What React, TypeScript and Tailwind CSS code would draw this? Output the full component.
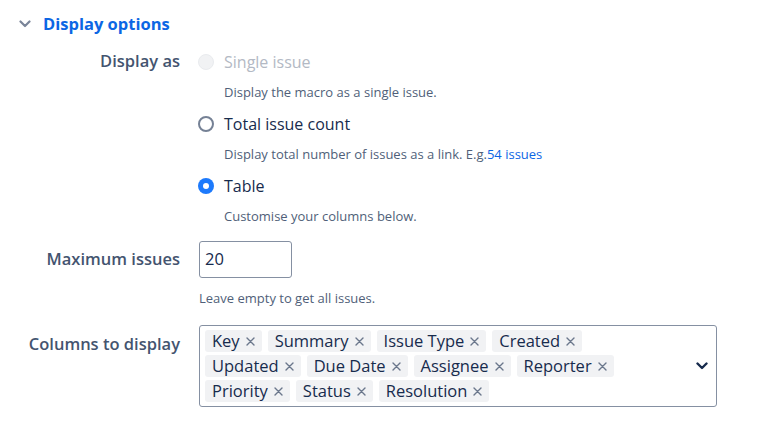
import React from "react";

const tags = [
  "Key",
  "Summary",
  "Issue Type",
  "Created",
  "Updated",
  "Due Date",
  "Assignee",
  "Reporter",
  "Priority",
  "Status",
  "Resolution",
];

function Radio({ state }: { state: "off" | "on" | "disabled" }) {
  if (state === "on") {
    return (
      <span className="flex h-[16px] w-[16px] items-center justify-center rounded-full bg-[#1d7afc]">
        <span className="h-[6px] w-[6px] rounded-full bg-white" />
      </span>
    );
  }
  if (state === "disabled") {
    return <span className="h-[16px] w-[16px] rounded-full border border-[#e9ebee] bg-[#f1f2f4]" />;
  }
  return <span className="h-[16px] w-[16px] rounded-full border-2 border-[#758195] bg-white" />;
}

function Option({
  state,
  label,
  children,
}: {
  state: "off" | "on" | "disabled";
  label: string;
  children: React.ReactNode;
}) {
  return (
    <div>
      <div className="flex h-[31px] items-center gap-[10px]">
        <Radio state={state} />
        <span
          className={
            "text-[16px] " + (state === "disabled" ? "text-[#b3b9c4]" : "text-[#172b4d]")
          }
        >
          {label}
        </span>
      </div>
      <div className="flex h-[31px] items-center pl-[26px] text-[13px] text-[#505f79]">
        {children}
      </div>
    </div>
  );
}

function Cross() {
  return (
    <svg width="9" height="9" viewBox="0 0 9 9" className="text-[#6b778c]">
      <path d="M1 1l7 7M8 1l-7 7" stroke="currentColor" strokeWidth="1.4" strokeLinecap="round" />
    </svg>
  );
}

export default function App() {
  return (
    <div
      className="h-[427px] w-[760px] bg-white"
      style={{ fontFamily: '"Open Sans", "Noto Sans", sans-serif' }}
    >
      <div className="flex h-[46px] items-center gap-[12px] pl-[19px] pt-[2px]">
        <svg width="12" height="8" viewBox="0 0 12 8" className="text-[#7a8599]">
          <path d="M1.5 1.5 6 6l4.5-4.5" fill="none" stroke="currentColor" strokeWidth="2.2" strokeLinecap="round" strokeLinejoin="round" />
        </svg>
        <span className="text-[16.5px] font-bold text-[#0c66e4]">Display options</span>
      </div>

      <div className="grid grid-cols-[180px_1fr] gap-x-[18px]">
        <div className="flex h-[31px] items-center justify-end text-[16.5px] font-semibold text-[#44546f]">
          Display as
        </div>
        <div>
          <Option state="disabled" label="Single issue">
            Display the macro as a single issue.
          </Option>
          <Option state="off" label="Total issue count">
            Display total number of issues as a link. E.g.
            <span className="text-[#0c66e4]">54 issues</span>
          </Option>
          <Option state="on" label="Table">
            Customise your columns below.
          </Option>
        </div>

        <div className="mt-[9px] flex h-[37px] items-center justify-end text-[16.5px] font-semibold text-[#44546f]">
          Maximum issues
        </div>
        <div className="mt-[9px] pl-px">
          <div className="flex h-[37px] w-[93px] items-center rounded-[3px] border border-[#8590a2] px-[5px] text-[16.5px] text-[#172b4d]">
            20
          </div>
          <div className="mt-[9px] flex h-[22px] items-center pt-[2px] text-[13px] text-[#505f79]">
            Leave empty to get all issues.
          </div>
        </div>

        <div className="mt-[16px] flex h-[38px] items-center justify-end text-[16.5px] font-semibold text-[#44546f]">
          Columns to display
        </div>
        <div className="mt-[16px] pl-px">
          <div className="flex h-[82px] w-[518px] items-center justify-between rounded-[3px] border border-[#8590a2] pl-[5px] pr-[8px]">
            <div className="flex w-[450px] flex-wrap gap-x-[6px] gap-y-[3px]">
              {tags.map((t) => (
                <span
                  key={t}
                  className="flex h-[22px] items-center gap-[6px] rounded-[3px] bg-[#f1f2f4] px-[7px] text-[16.5px] text-[#172b4d]"
                >
                  {t}
                  <Cross />
                </span>
              ))}
            </div>
            <svg width="12" height="8" viewBox="0 0 12 8" className="text-[#172b4d]">
              <path d="M1.5 1.5 6 6l4.5-4.5" fill="none" stroke="currentColor" strokeWidth="2.4" strokeLinecap="round" strokeLinejoin="round" />
            </svg>
          </div>
        </div>
      </div>
    </div>
  );
}
